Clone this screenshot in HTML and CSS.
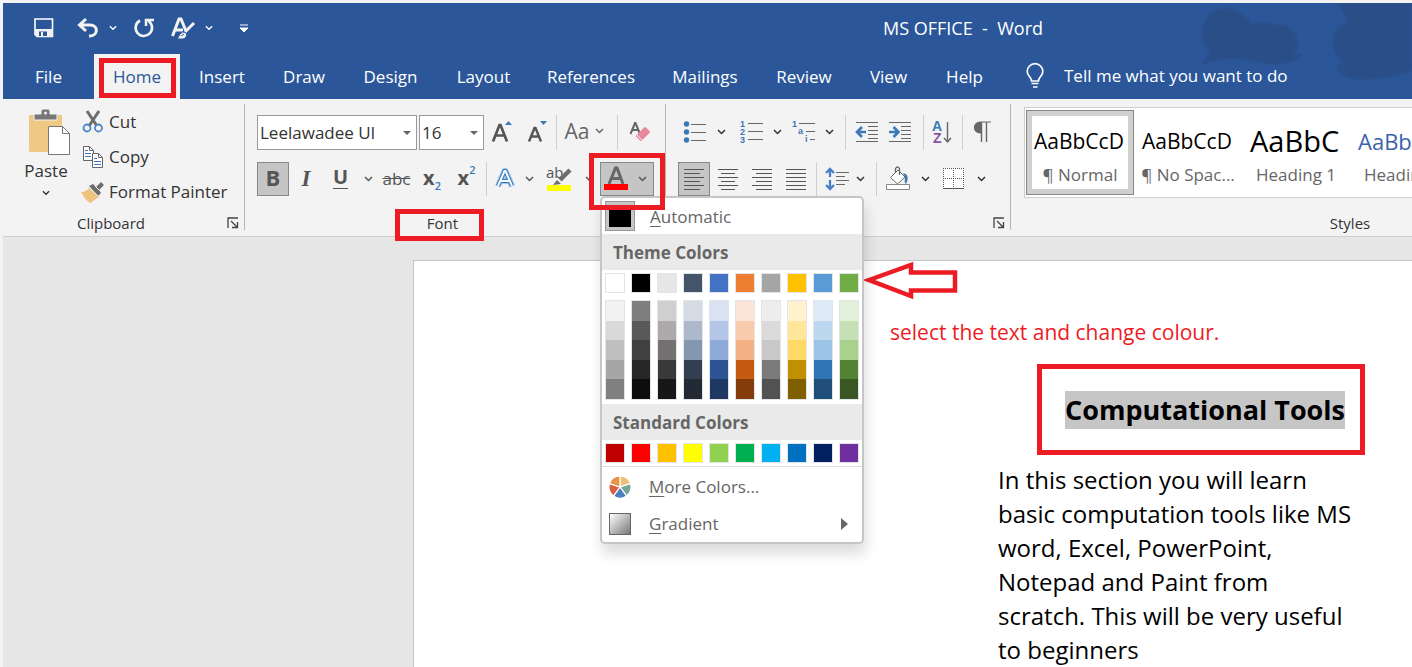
FILE: index.html
```html
<!DOCTYPE html>
<html lang="en">
<head>
<meta charset="utf-8">
<title>MS OFFICE - Word</title>
<link rel="stylesheet" href="styles.css">
</head>
<body>
<svg class="defs" aria-hidden="true">
  <symbol id="chev" viewBox="0 0 9 6"><path d="M1 1l3.500 3.500L8 1" fill="none" stroke="currentColor" stroke-width="1.500"/></symbol>
  <symbol id="launch" viewBox="0 0 12 12"><path d="M1 11V1h10M4 4l6 6M10.500 5v5.500H5" fill="none" stroke="#444" stroke-width="1.300"/></symbol>
</svg>
<div class="app">
  <header class="header">
    <svg class="smudge" viewBox="0 0 240 96" aria-hidden="true">
      <path d="M30 62C34 54 36 52 38 50C28 40 28 26 34 16C46 0 66 2 80 22C92 16 96 20 102 22C114 18 126 28 126 42C126 50 120 54 118 54L132 50C130 58 108 64 90 60C68 54 48 54 30 62Z"/>
      <path d="M164 0H240V68C210 76 196 78 180 76C166 72 162 64 166 61L174 62C158 50 156 30 170 22C180 20 172 10 164 0Z"/>
    </svg>
    <div class="titlebar">
      <button class="q" aria-label="Save"><svg width="20" height="20" viewBox="0 0 20 20"><path d="M1 1h17.500v17.500H3L1 16.500z" fill="none" stroke="#fff" stroke-width="1.600"/><path d="M1 11h18v8H3l-2-2z" fill="#f0f0f0"/><path d="M5 13.500h8v4.500H5z" fill="#2b579a"/><path d="M7 14h2v4H7z" fill="#f0f0f0"/></svg></button>
      <button class="q" aria-label="Undo"><svg width="22" height="20" viewBox="0 0 22 20"><path d="M2 7h11c9 0 8 11 0 11h-1M9 1L2.500 7 9 13" fill="none" stroke="#f3f3f3" stroke-width="3"/></svg></button>
      <button class="q light" aria-label="Undo options"><svg width="8" height="6"><use href="#chev"/></svg></button>
      <button class="q" aria-label="Repeat"><svg width="21" height="20" viewBox="0 0 21 20"><path d="M6 2.500A8.200 8.200 0 1 0 14.500 3" fill="none" stroke="#f3f3f3" stroke-width="2.600"/><path d="M12 8V2h8" fill="none" stroke="#f3f3f3" stroke-width="2.500"/></svg></button>
      <button class="q" aria-label="Format effects"><svg width="24" height="23" viewBox="0 0 24 23"><path d="M1.500 19L8 2h2l5 12M4 13h8" fill="none" stroke="#f3f3f3" stroke-width="3"/><path d="M23 6L14 15" stroke="#f3f3f3" stroke-width="3"/><path d="M6 22c2-1 2-7 7-7 4 1 3 6-1 7z" fill="#f3f3f3" stroke="#2b579a"/><path d="M10 19l3-2" stroke="#2b579a"/></svg></button>
      <button class="q light" aria-label="Effects options"><svg width="8" height="6"><use href="#chev"/></svg></button>
      <button class="q" aria-label="Customize toolbar"><svg width="8" height="8" viewBox="0 0 8 8"><path d="M0 1h8M0 4h8L4 8z" fill="#fff" stroke="#fff" stroke-width="1"/></svg></button>
      <h1 class="title">MS OFFICE&nbsp; -&nbsp; Word</h1>
    </div>
    <nav class="tabs">
      <button>File</button>
      <button class="active">Home<span class="mark"></span></button>
      <button>Insert</button><button>Draw</button><button>Design</button><button>Layout</button>
      <button>References</button><button>Mailings</button><button>Review</button><button>View</button><button>Help</button>
      <label class="tell"><svg width="18" height="26" viewBox="0 0 18 26"><path d="M5.500 18C5.500 14 1.200 13 1.200 8.500a7.800 7.800 0 0 1 15.600 0C16.800 13 12.500 14 12.500 18zM5.500 20.500h7M7 24h4.500" fill="none" stroke="#fff" stroke-width="1.700"/></svg><input type="text" aria-label="Tell me what you want to do" placeholder="Tell me what you want to do"></label>
    </nav>
  </header>

  <section class="ribbon">
    <div class="group clipboard">
      <div class="clip-body">
        <button class="paste">
          <svg width="42" height="46" viewBox="0 0 42 46"><rect x="1" y="6" width="33" height="37" rx="1" fill="#eec983"/><path d="M6 5h7V2q0-2 2-2h5q2 0 2 2v3h7v6H6z" fill="#777" stroke="#f3f3f3"/><circle cx="17.500" cy="4" r="1.500" fill="#f3f3f3"/><path d="M20.500 17.500h14l7 7v21h-21z" fill="#fff" stroke="#777"/><path d="M34.500 17.500v7h7" fill="none" stroke="#777"/></svg>
          <span>Paste</span><svg width="8" height="6"><use href="#chev"/></svg>
        </button>
        <div class="clip-list">
          <button><svg width="22" height="24" viewBox="0 0 22 24"><path d="M5 1l10 15M17 1L7 16" stroke="#6d6d6d" stroke-width="3"/><circle cx="5" cy="18" r="3.500" fill="#f3f3f3" stroke="#4a86c5" stroke-width="1.800"/><circle cx="16.500" cy="18" r="3.500" fill="#f3f3f3" stroke="#4a86c5" stroke-width="1.800"/></svg>Cut</button>
          <button><svg width="22" height="24" viewBox="0 0 22 24"><path d="M1.500 1.500h6l4 4v10h-10z" fill="#fff" stroke="#666"/><path d="M7.500 1.500v4h4" fill="none" stroke="#666"/><path d="M3 5.500h3M3 8.500h6M3 11.500h6" stroke="#3c78b8"/><path d="M10.500 8.500h6l4 4v10h-10z" fill="#fff" stroke="#666"/><path d="M16.500 8.500v4h4" fill="none" stroke="#666"/><path d="M12 13.500h3M12 16.500h7M12 19.500h7" stroke="#3c78b8"/></svg>Copy</button>
          <button><svg width="24" height="24" viewBox="0 0 24 24"><path d="M0 12c5 0 6-2 8-4l10 9-9 6c-3-2-6-5-9-11z" fill="#eec27f"/><path d="M8 6l4-2 3 3 5-5 3 3-5 5 2 3-3 3z" fill="#6d6d6d"/><path d="M8 7l9 9M14 6l4 4" stroke="#f3f3f3"/></svg>Format Painter</button>
        </div>
      </div>
      <div class="glabel"><span>Clipboard</span><button aria-label="Clipboard settings"><svg width="12" height="12"><use href="#launch"/></svg></button></div>
    </div>
    <i class="rule"></i>
    <div class="group font">
      <div class="rows">
        <div class="row f1">
          <span class="combo"><select aria-label="Font name"><option>Leelawadee UI</option></select></span>
          <span class="combo size"><select aria-label="Font size"><option>16</option></select></span>
          <button aria-label="Grow font"><svg width="22" height="24" viewBox="0 0 22 24"><path d="M2 21.500L8.500 5h1L16 21.500M5 15.500h8" fill="none" stroke="#555" stroke-width="2.700"/><path d="M14 5h7l-3.500-4z" fill="#3c78b8"/></svg></button>
          <button aria-label="Shrink font"><svg width="22" height="24" viewBox="0 0 22 24"><path d="M3 21.500L8.500 8h1L15 21.500M5 16.500h8" fill="none" stroke="#555" stroke-width="2.400"/><path d="M14 1h7l-3.500 4z" fill="#3c78b8"/></svg></button>
          <i class="sep"></i>
          <button class="case" aria-label="Change case">Aa<svg width="9" height="6"><use href="#chev"/></svg></button>
          <i class="sep"></i>
          <button aria-label="Clear formatting"><svg width="22" height="24" viewBox="0 0 22 24"><path d="M1.500 14L6 3h.500L11 14M3 10h7" fill="none" stroke="#666" stroke-width="2"/><path d="M8 16L16 8l4 4-8 8z" fill="#e8879b" stroke="#e8879b" stroke-width="2" stroke-linejoin="round"/><path d="M7 14l7 7" stroke="#f3f3f3" stroke-width="1"/></svg></button>
        </div>
        <div class="row f2">
          <button class="on bold">B</button><button class="ital">I</button><button class="under">U</button>
          <button aria-label="Underline options"><svg width="9" height="6"><use href="#chev"/></svg></button>
          <button class="strike">abc</button>
          <button class="script">x<sub>2</sub></button><button class="script">x<sup>2</sup></button>
          <i class="sep"></i>
          <button aria-label="Text effects"><svg width="20" height="22" viewBox="0 0 20 22"><path d="M3 18L9.500 3h1L17 18M6 13h8" fill="none" stroke="#9cc3ea" stroke-width="6" stroke-linejoin="round"/><path d="M3 18L9.500 3h1L17 18M6 13h8" fill="none" stroke="#3478bd" stroke-width="4"/><path d="M3 18L9.500 3h1L17 18M6 13h8" fill="none" stroke="#fff" stroke-width="2"/></svg></button>
          <button aria-label="Effects options"><svg width="9" height="6"><use href="#chev"/></svg></button>
          <button class="hilite" aria-label="Highlight"><span>ab</span><svg width="26" height="26" viewBox="0 0 26 26"><path d="M24 4L14 14" stroke="#6d6d6d" stroke-width="4.500"/><path d="M7 19l4-5 4 4z" fill="#6d6d6d"/><path d="M11 12l5 5" stroke="#f3f3f3"/><path d="M1 19h24v6H1z" fill="#ff0"/></svg></button>
          <button class="hchev" aria-label="Highlight options"><svg width="9" height="6"><use href="#chev"/></svg></button>
          <div class="colorpick">
            <button class="on" aria-label="Font color"><svg width="24" height="26" viewBox="0 0 24 26"><path d="M5 18L11.500 2h1.500L19 18M8 12.500h8" fill="none" stroke="#666" stroke-width="3"/><path d="M0 18h24v6H0z" fill="red"/></svg><svg width="9" height="6"><use href="#chev"/></svg></button>
            <span class="mark"></span>
            <div class="menu">
              <button class="auto"><i></i><span><u>A</u>utomatic</span></button>
              <h2>Theme Colors</h2>
              <div class="swatches" id="theme"></div>
              <div class="tints" id="tints"></div>
              <h2>Standard Colors</h2>
              <div class="swatches" id="standard"></div>
              <div class="more">
                <button><svg width="22" height="22" viewBox="-11 -11 22 22"><g stroke="#fff" stroke-width="1.200"><path d="M0 0V-11A11 11 0 0 1 10.460-3.400z" fill="#ebc27c"/><path d="M0 0L10.460-3.400A11 11 0 0 1 6.470 8.900z" fill="#76a797"/><path d="M0 0L6.470 8.900A11 11 0 0 1-6.470 8.900z" fill="#4a7fbd"/><path d="M0 0L-6.470 8.900A11 11 0 0 1-10.460-3.400z" fill="#d8603f"/><path d="M0 0L-10.460-3.400A11 11 0 0 1 0-11z" fill="#e8924a"/></g></svg><span><u>M</u>ore Colors...</span></button>
                <button><i class="grad"></i><span><u>G</u>radient</span><b class="arrow"></b></button>
              </div>
            </div>
          </div>
        </div>
      </div>
      <div class="glabel"><span>Font<span class="mark"></span></span><button aria-label="Font settings"><svg width="12" height="12"><use href="#launch"/></svg></button></div>
    </div>
    <i class="rule"></i>
    <div class="group para">
      <div class="rows">
        <div class="row p1">
          <button aria-label="Bullets"><svg width="24" height="22" viewBox="0 0 24 22"><g fill="#3c78b8"><circle cx="3.500" cy="3" r="2.700"/><circle cx="3.500" cy="11" r="2.700"/><circle cx="3.500" cy="19" r="2.700"/></g><path d="M8 3.500h15M8 11.500h15M8 19.500h15" stroke="#666"/></svg></button>
          <button aria-label="Bullet options"><svg width="9" height="6"><use href="#chev"/></svg></button>
          <button aria-label="Numbering"><svg width="24" height="24" viewBox="0 0 24 24"><g class="num"><text x="1" y="7">1</text><text x="1" y="15">2</text><text x="1" y="23">3</text></g><path d="M9 3.500h15M9 11.500h15M9 19.500h15" stroke="#666"/></svg></button>
          <button aria-label="Numbering options"><svg width="9" height="6"><use href="#chev"/></svg></button>
          <button aria-label="Multilevel list"><svg width="24" height="24" viewBox="0 0 24 24"><g class="num"><text x="0" y="7">1</text><text x="6" y="14">a</text><text x="13" y="22">i</text></g><path d="M7 3.500h16M14 11.500h9M18 19.500h5" stroke="#666"/></svg></button>
          <button aria-label="Multilevel options"><svg width="9" height="6"><use href="#chev"/></svg></button>
          <i class="sep"></i>
          <button aria-label="Decrease indent"><svg width="22" height="22" viewBox="0 0 22 22"><path d="M0 1.500h22M12 5.500h10M12 9.500h10M12 13.500h10M12 17.500h10M0 20.500h22" stroke="#666"/><path d="M10 11H3M6 6l-5 5 5 5" fill="none" stroke="#3c78b8" stroke-width="2.600"/></svg></button>
          <button aria-label="Increase indent"><svg width="22" height="22" viewBox="0 0 22 22"><path d="M0 1.500h22M12 5.500h10M12 9.500h10M12 13.500h10M12 17.500h10M0 20.500h22" stroke="#666"/><path d="M0 11h8M4.500 6l5 5-5 5" fill="none" stroke="#3c78b8" stroke-width="2.600"/></svg></button>
          <i class="sep"></i>
          <button aria-label="Sort"><svg width="20" height="24" viewBox="0 0 20 24"><text class="sa" x="0" y="11">A</text><text class="sz" x="1" y="23">Z</text><path d="M15.500 2v20M12 18l3.500 4 3.500-4" fill="none" stroke="#666" stroke-width="1.400"/></svg></button>
          <i class="sep"></i>
          <button aria-label="Show paragraph marks"><svg width="17" height="22" viewBox="0 0 17 22"><path d="M7 1h-1a5.500 5.500 0 0 0 0 11h1zM6 1h11" fill="#666" stroke="#666" stroke-width="1.200"/><path d="M7.500 1v20M12.500 1v20" stroke="#666" stroke-width="1.400"/></svg></button>
        </div>
        <div class="row p2">
          <button class="on" aria-label="Align left"><svg width="20" height="22" viewBox="0 0 20 22"><path d="M0 1.500h20M0 5.500h16M0 9.500h20M0 13.500h16M0 17.500h20M0 21.500h16" stroke="#555"/></svg></button>
          <button aria-label="Center"><svg width="20" height="22" viewBox="0 0 20 22"><path d="M0 1.500h20M3 5.500h14M0 9.500h20M3 13.500h14M0 17.500h20M3 21.500h14" stroke="#555"/></svg></button>
          <button aria-label="Align right"><svg width="20" height="22" viewBox="0 0 20 22"><path d="M0 1.500h20M4 5.500h16M0 9.500h20M4 13.500h16M0 17.500h20M4 21.500h16" stroke="#555"/></svg></button>
          <button aria-label="Justify"><svg width="20" height="22" viewBox="0 0 20 22"><path d="M0 1.500h20M0 5.500h20M0 9.500h20M0 13.500h20M0 17.500h20M0 21.500h20" stroke="#555"/></svg></button>
          <i class="sep"></i>
          <button aria-label="Line spacing"><svg width="24" height="24" viewBox="0 0 24 24"><path d="M5 2v8M1 6l4-4 4 4M5 13v9M1 18l4 4 4-4" fill="none" stroke="#4a7fc8" stroke-width="2.300"/><path d="M11 5.500h13M11 9.500h9M11 13.500h13M11 17.500h9" stroke="#666"/></svg></button>
          <button aria-label="Spacing options"><svg width="9" height="6"><use href="#chev"/></svg></button>
          <i class="sep"></i>
          <button aria-label="Shading"><svg width="25" height="25" viewBox="0 0 25 25"><path d="M4.500 11.500L12 4l7 7-7.500 7z" fill="#fff" stroke="#666"/><path d="M9.500 7V2.500q2-3 4 0V9" fill="none" stroke="#666" stroke-width="1.300"/><path d="M17 7c5 1 6 5 3 11-2-2-1-4-1-7z" fill="#3c78b8"/><path d="M.500 18.500h23v5H.500z" fill="#fff" stroke="#888"/></svg></button>
          <button aria-label="Shading options"><svg width="9" height="6"><use href="#chev"/></svg></button>
          <button aria-label="Borders"><svg width="22" height="22" viewBox="0 0 22 22"><path d="M0 0h21v21H0z" fill="#fff"/><path d="M0 .500h21M0 10.500h21M.500 0v20M10.500 0v20M20.500 0v20" fill="none" stroke="#555" stroke-dasharray="1 1"/><path d="M0 20.500h21" stroke="#555"/></svg></button>
          <button aria-label="Border options"><svg width="9" height="6"><use href="#chev"/></svg></button>
        </div>
      </div>
      <div class="glabel"><span>Paragraph</span><button aria-label="Paragraph settings"><svg width="12" height="12"><use href="#launch"/></svg></button></div>
    </div>
    <i class="rule"></i>
    <div class="group styles">
      <div class="styles-in">
        <div class="gallery">
          <button class="chosen"><span class="pv">AaBbCcD</span><span>¶ Normal</span></button>
          <button><span class="pv">AaBbCcD</span><span>¶ No Spac...</span></button>
          <button><span class="pv big">AaBbCc</span><span>Heading 1</span></button>
          <button><span class="pv blue">AaBbCcD</span><span>Heading 2</span></button>
        </div>
        <div class="glabel"><span>Styles</span></div>
      </div>
    </div>
  </section>

  <main class="workspace">
    <article class="page">
      <svg class="pointer" width="92" height="38" viewBox="0 0 92 38" aria-hidden="true"><path d="M3 19L45 4v7.500h44V29.500H45V35z" fill="#fff" stroke="#ed1c24" stroke-width="4.500"/></svg>
      <p class="note">select the text and change colour.</p>
      <div class="heading"><h2><mark>Computational Tools</mark></h2></div>
      <p class="copy">In this section you will learn<br>basic computation tools like MS<br>word, Excel, PowerPoint,<br>Notepad and Paint from<br>scratch. This will be very useful<br>to beginners</p>
    </article>
  </main>
</div>
<script src="script.js"></script>
</body>
</html>
```
FILE: script.js
```js
const theme = [
  ['#ffffff', '#f2f2f2', '#d9d9d9', '#bfbfbf', '#a6a6a6', '#808080'],
  ['#000000', '#7f7f7f', '#595959', '#404040', '#262626', '#0d0d0d'],
  ['#e7e6e6', '#d0cece', '#aeaaaa', '#767171', '#3a3838', '#171717'],
  ['#44546a', '#d6dce5', '#adb9ca', '#8497b0', '#333f50', '#222a35'],
  ['#4472c4', '#d9e1f3', '#b4c6e7', '#8eaadb', '#2f5496', '#1f3864'],
  ['#ed7d31', '#fbe5d6', '#f8cbad', '#f4b183', '#c55a11', '#843c0c'],
  ['#a5a5a5', '#ededed', '#dbdbdb', '#c9c9c9', '#7b7b7b', '#525252'],
  ['#ffc000', '#fff2cc', '#ffe699', '#ffd966', '#bf9000', '#7f6000'],
  ['#5b9bd5', '#deebf7', '#bdd7ee', '#9dc3e6', '#2e75b6', '#1f4e79'],
  ['#70ad47', '#e2f0d9', '#c5e0b4', '#a9d18e', '#548235', '#385723']
];
const standard = ['#c00000', '#ff0000', '#ffc000', '#ffff00', '#92d050', '#00b050', '#00b0f0', '#0070c0', '#002060', '#7030a0'];

function swatch(color) {
  const b = document.createElement('button');
  b.setAttribute('aria-label', color);
  b.style.backgroundColor = color;
  return b;
}
theme.forEach(([base, ...shades]) => {
  document.getElementById('theme').append(swatch(base));
  const col = document.createElement('div');
  col.append(...shades.map(swatch));
  document.getElementById('tints').append(col);
});
document.getElementById('standard').append(...standard.map(swatch));
```
FILE: styles.css
```css
* { box-sizing: border-box; }
body {
  margin: 0;
  background: #f3f3f3;
  color: #333;
  font: 17px/24px "Open Sans", "Noto Sans", sans-serif;
  overflow: hidden;
}
button {
  margin: 0; padding: 0; border: 0;
  background: none; color: inherit; font: inherit;
}
svg { flex: none; overflow: visible; }
h1, h2, p { margin: 0; font: inherit; }
.defs { position: absolute; width: 0; height: 0; }
.app { display: flex; flex-direction: column; min-height: 100vh; padding: 3px 0 0 3px; }
.mark { position: absolute; border: 5px solid #ed1c24; pointer-events: none; }

.header { position: relative; background: #2b579a; color: #fff; overflow: hidden; }
.smudge { position: absolute; top: 0; right: 0; width: 240px; height: 96px; fill: #2a4b80; opacity: .7; filter: blur(1px); }
.titlebar {
  position: relative;
  display: grid;
  grid-template-columns: 42px 46px 4px 58px 20px 32px 38px 1fr;
  height: 51px;
  padding: 0 0 2px 20px;
}
.q { display: flex; align-items: center; justify-content: center; }
.light { color: #fff; }
.title { padding-left: 620px; font-size: 18px; line-height: 50px; white-space: nowrap; }
.tabs {
  position: relative;
  display: grid;
  grid-template-columns: 91px 86px 84px 80px 93px 93px 122px 106px 92px 77px 75px 1fr;
  height: 45px;
}
.tabs .active { position: relative; background: #f3f3f3; color: #2b579a; }
.active .mark { inset: 4px 4px 1px 5px; }
.tell { display: flex; align-items: center; gap: 20px; padding: 0 0 2px 24px; }
.tell input { width: 260px; padding: 0; border: 0; background: none; color: #fff; font: inherit; }
.tell input::placeholder { color: #fff; opacity: 1; }

.ribbon { position: relative; z-index: 1; display: flex; height: 138px; background: #f3f3f3; border-bottom: 1px solid #cfcfcf; }
.rule { flex: none; width: 1px; margin: 5px 0 6px; background: #b4b4b4; }
.group { flex: none; display: flex; flex-direction: column; justify-content: space-between; }
.clipboard { width: 241px; }
.font { width: 420px; }
.para { width: 344px; }
.styles { flex: 1; min-width: 0; overflow: hidden; }
.glabel { display: flex; height: 23px; padding-right: 5px; font-size: 15px; line-height: 20px; }
.glabel > span { position: relative; margin: 0 auto auto; }
.glabel .mark { inset: -4px -26px -8px -32px; }
.glabel button { display: flex; align-items: center; justify-content: flex-end; width: 20px; height: 20px; }
.clip-body { display: flex; padding-top: 5px; }
.paste { display: flex; flex-direction: column; align-items: center; width: 78px; padding: 5px 0 0 16px; }
.paste span { margin: 4px 8px 7px 0; }
.paste svg:first-child { margin-right: 2px; }
.paste svg:last-child { margin-right: 8px; }
.clip-list button { display: flex; align-items: center; gap: 4px; height: 35px; white-space: nowrap; }
.clip-list svg { width: 24px; }
.rows { display: flex; flex-direction: column; gap: 12px; padding: 16px 0 0 12px; }
.row { display: grid; height: 35px; }
.row + .row { height: 34px; }
.row > button { display: flex; align-items: center; justify-content: center; min-width: 0; padding-bottom: 1px; }
.sep { justify-self: center; width: 1px; background: #cfcfcf; }
.f1 { grid-template-columns: 162px 65px 35px 35px 4px 57px 4px 42px; }
.f2 { grid-template-columns: 32px 34px 35px 20px 37px 34px 35px 4px 34px 14px 45px 17px 56px; color: #555; }
.p1 { grid-template-columns: 33px 20px 39px 14px 40px 10px 22px 22px 44px 2px 36px 4px 36px; }
.p2 { grid-template-columns: 32px 36px 32px 36px 4px 38px 8px 24px 20px 34px 24px 30px; }
.combo { position: relative; margin-right: 2px; }
.combo.size { margin-right: 0; }
.combo select { width: 100%; height: 35px; padding: 0 2px; border: 1px solid #999; border-radius: 0; background: #fff; color: #333; font: inherit; appearance: none; }
.combo::after { content: ""; position: absolute; right: 6px; top: 16px; border: 4px solid transparent; border-top-color: #666; border-bottom: 0; }
.row .case { gap: 6px; padding: 0 4px 4px 0; color: #666; font-size: 21px; }
.on, .row > .on { background: #c5c5c5; border: 1px solid #888; }
.row > .bold { padding-bottom: 4px; font-size: 22px; font-weight: 700; }
.ital { font: italic 700 23px "Liberation Serif", serif; }
.row > .under { padding-bottom: 4px; font-size: 20px; font-weight: 700; text-decoration: underline; text-decoration-thickness: 1px; text-underline-offset: 4px; }
.strike { text-decoration: line-through; }
.row > .script { padding-bottom: 3px; font-size: 20px; font-weight: 700; }
.script sub, .script sup { color: #3c78b8; font-size: 11px; line-height: 11px; font-weight: 600; }
.script sub { margin-top: 16px; }
.script sup { margin-bottom: 16px; }
.hilite { position: relative; }
.hilite span { position: absolute; left: 10px; top: 0; font-size: 15px; line-height: 20px; }
.hilite svg { position: relative; }
.num { fill: #3c78b8; font: 700 9px "Liberation Sans", sans-serif; }
.sa, .sz { font: 700 14px "Liberation Sans", sans-serif; fill: #3c78b8; }
.sz { fill: #8a4fa8; }
.colorpick { position: relative; width: 54px; justify-self: end; }
.colorpick > .on { display: flex; align-items: center; justify-content: space-between; width: 54px; height: 34px; padding: 0 6px 0 3px; }
.colorpick > .mark { z-index: 3; inset: -9px -11px -14px; }

.menu {
  position: absolute; z-index: 2; left: 0; top: 34px;
  width: 264px;
  border: 2px solid #c6c6c6; border-radius: 5px;
  background: #fff; color: #666;
  box-shadow: 2px 10px 14px rgba(0, 0, 0, .14);
}
.menu u { text-underline-offset: 3px; text-decoration-thickness: 1px; }
.menu h2 { height: 36px; padding-left: 11px; background: #eaeaea; font-weight: 700; line-height: 38px; }
.menu .auto { display: flex; align-items: center; gap: 15px; width: 100%; height: 36px; padding-left: 3px; }
.auto i { width: 30px; height: 30px; border: 1px solid #999; background: #000; box-shadow: inset 0 0 0 3px #c6c6c6; }
.auto span { padding-top: 2px; }
.swatches { display: flex; gap: 6px; padding: 3px; }
.swatches button { width: 20px; height: 20px; border: 1px solid #e2e4e7; }
.tints { display: flex; gap: 6px; padding: 4px 3px; }
.tints div { display: flex; flex-direction: column; width: 20px; height: 100px; border: 1px solid #e2e4e7; }
.tints button { flex: 1; }
.more { padding-bottom: 1px; border-top: 1px solid #ddd; }
.more button { display: flex; align-items: center; gap: 18px; width: 100%; height: 37px; padding: 2px 14px 0 7px; }
.grad { width: 22px; height: 22px; border: 1px solid #666; background: linear-gradient(135deg, #fff, #777); }
.arrow { margin-left: auto; border: 6px solid transparent; border-left: 7px solid #666; border-right: 0; }

.styles-in { display: flex; flex-direction: column; justify-content: space-between; width: 670px; height: 100%; padding-left: 13px; }
.gallery { display: flex; height: 91px; margin-top: 8px; padding: 2px 1px; border: 1px solid #cfcfcf; background: #fff; }
.gallery button { flex: none; width: 108px; height: 85px; padding: 6px; color: #666; line-height: 24px; }
.gallery .chosen { border: 1px solid #868686; padding: 5px; box-shadow: inset 0 0 0 5px #d0d0ce; }
.gallery span { display: block; white-space: nowrap; }
.gallery .pv { height: 40px; margin: 2px 4px 2px 0; padding-left: 2px; overflow: hidden; color: #000; font-size: 21px; line-height: 40px; text-align: left; }
.gallery .big { font-size: 29px; }
.gallery .blue { color: #3a62ae; font-size: 22px; }

.workspace { flex: 1; display: flex; padding: 23px 0 0 410px; background: #e6e6e6; }
.page { position: relative; flex: 1; height: 407px; border: solid #c6c6c6; border-width: 1px 0 0 1px; background: #fff; color: #000; white-space: nowrap; }
.pointer { position: absolute; left: 452px; top: 0; }
.note { margin: 58px 0 19px 476px; color: #ed1c24; font-size: 21px; line-height: 26px; }
.heading { display: flex; align-items: center; justify-content: center; width: 328px; height: 91px; margin-left: 623px; padding-left: 8px; border: 5px solid #ed1c24; }
.heading h2 { font-size: 27px; font-weight: 700; line-height: 38px; }
.heading mark { display: block; background: #c6c6c6; }
.copy { margin: 8px 0 0 584px; font-size: 24px; line-height: 34px; }
```
